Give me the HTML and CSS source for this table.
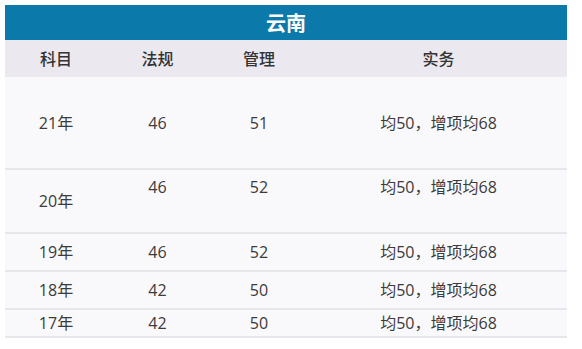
FILE: index.html
```html
<!DOCTYPE html>
<html lang="zh-CN">
<head>
<meta charset="utf-8">
<title>云南</title>
<link rel="stylesheet" href="styles.css">
</head>
<body>
<div class="wrap">
  <div class="title">云南</div>
  <table class="grid">
    <colgroup>
      <col class="c1"><col class="c2"><col class="c3"><col class="c4">
    </colgroup>
    <thead>
      <tr><th>科目</th><th>法规</th><th>管理</th><th>实务</th></tr>
    </thead>
    <tbody>
      <tr class="r1"><td>21年</td><td>46</td><td>51</td><td>均50，增项均68</td></tr>
      <tr class="r2"><td>20年</td><td class="top">46</td><td class="top">52</td><td class="top">均50，增项均68</td></tr>
      <tr class="r3"><td>19年</td><td>46</td><td>52</td><td>均50，增项均68</td></tr>
      <tr class="r4"><td>18年</td><td>42</td><td>50</td><td>均50，增项均68</td></tr>
      <tr class="r5"><td>17年</td><td>42</td><td>50</td><td>均50，增项均68</td></tr>
    </tbody>
  </table>
</div>
</body>
</html>
```
FILE: styles.css
```css
html, body {
  margin: 0;
  padding: 0;
  background: #ffffff;
}
body {
  font-family: "Open Sans", "Noto Sans CJK SC", sans-serif;
  color: #3b3b3b;
}
.wrap {
  width: 562px;
  margin: 5px 0 0 5px;
}
.title {
  height: 35px;
  background: #0b7aaa;
  color: #ffffff;
  font-family: "Noto Sans CJK SC", sans-serif;
  font-weight: 700;
  font-size: 20px;
  line-height: 35px;
  text-align: center;
}
.grid {
  width: 562px;
  border-collapse: collapse;
  table-layout: fixed;
  font-size: 16px;
}
.c1 { width: 102px; }
.c2 { width: 101px; }
.c3 { width: 102px; }
.c4 { width: 257px; }
.grid th {
  height: 37px;
  padding: 0;
  background: #ebe8ef;
  font-weight: 500;
  color: #333333;
  text-align: center;
  vertical-align: middle;
  line-height: 22px;
}
.grid td {
  padding: 0;
  background: #f9f8fb;
  border-bottom: 2px solid #e8e6eb;
  text-align: center;
  vertical-align: middle;
  line-height: 22px;
}
.r1 td { height: 91px; }
.r2 td { height: 62px; }
.r3 td { height: 36px; }
.r4 td { height: 36px; }
.r5 td { height: 26px; }
.grid td.top {
  vertical-align: top;
  height: 56px;
  padding-top: 6px;
}
```
